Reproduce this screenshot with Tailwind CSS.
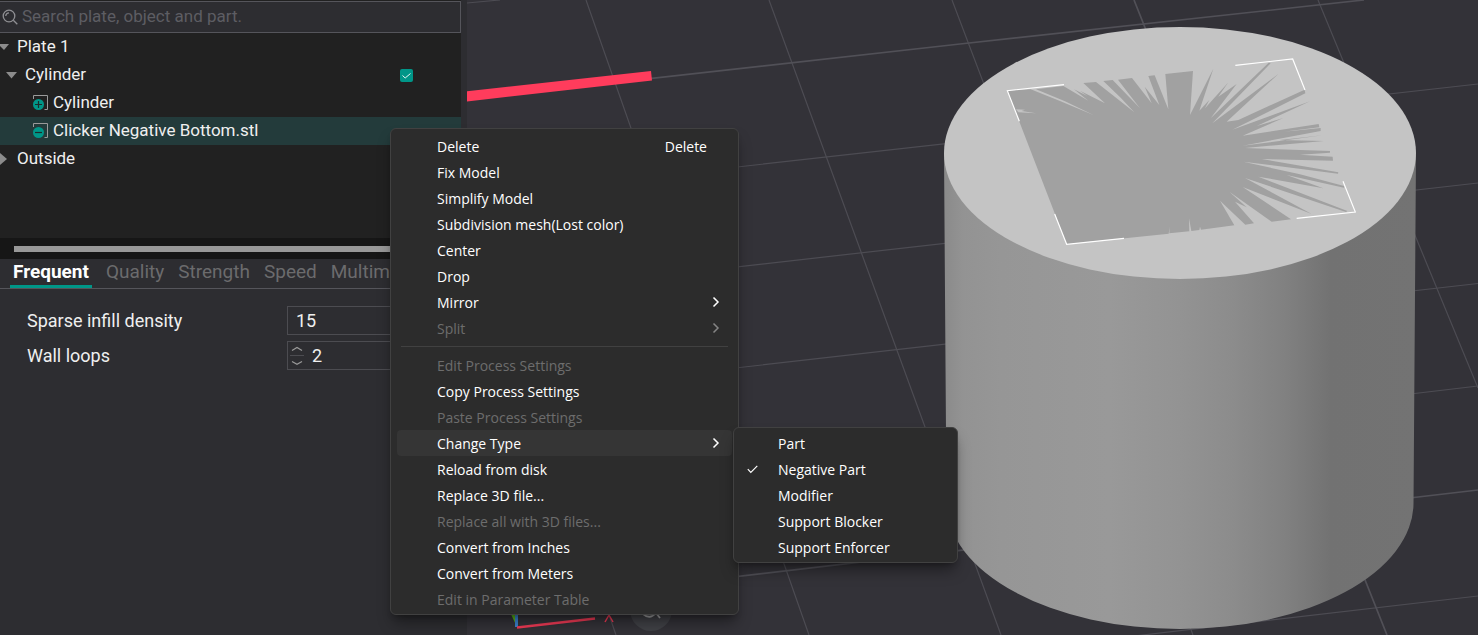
<!DOCTYPE html>
<html lang="en">
<head>
  <meta charset="UTF-8">
  <meta name="viewport" content="width=device-width, initial-scale=1.0">
  <title>Plate editor</title>
  <script src="https://cdn.jsdelivr.net/npm/@tailwindcss/browser@4"></script>
</head>
<body class="relative flex min-h-screen overflow-hidden bg-[#2d2d31] font-['Roboto',sans-serif] text-[17px] text-[#efefef]">

  <!-- Side panel -->
  <aside class="flex w-[467px] shrink-0 flex-col">
    <div class="mr-1.5 bg-[#212121]">
      <!-- Search -->
      <label class="mt-px flex h-8 items-center gap-1 border border-l-0 border-[#55555b] bg-[#2d2d31] pl-[2px]">
        <svg class="size-4 shrink-0" viewBox="0 0 16 16" fill="none" stroke="#8f8f93" stroke-width="1.3">
          <circle cx="7" cy="7" r="5.8"/>
          <path d="M11.3 11.3 15.3 15.3M3.8 7A3.2 3.2 0 0 1 7 3.8"/>
        </svg>
        <input type="text" aria-label="Search" placeholder="Search plate, object and part." class="w-full bg-transparent outline-none placeholder:text-[#5d5d63]">
      </label>

      <!-- Object tree -->
      <ul class="h-[205px]">
        <li class="flex h-7 items-center gap-2">
          <svg class="h-2 w-[9px]" viewBox="0 0 9 8" fill="#8c8c8c"><path d="M-2 1H9L4 7z"/></svg>
          <span>Plate 1</span>
        </li>
        <li class="flex h-7 items-center gap-2 pl-1.5">
          <svg class="h-2 w-[11px]" viewBox="0 0 11 8" fill="#8c8c8c"><path d="M0 1H11L5.500 7.500z"/></svg>
          <label for="cyl" class="flex-1">Cylinder</label>
          <span class="relative mr-12 size-[13px]">
            <input id="cyl" type="checkbox" checked class="block size-[13px] appearance-none rounded-[2px] bg-[#009688]">
            <svg class="pointer-events-none absolute inset-0" viewBox="0 0 13 13" fill="none" stroke="#e6f5f3"><path d="M2.500 6.500 5.200 9 10.500 4.500"/></svg>
          </span>
        </li>
        <li class="flex h-7 items-center gap-1 pl-[33px]">
          <svg class="size-4" viewBox="0 0 16 16" fill="none">
            <path d="M.5 4V.500H14.500V14.500H11.500" stroke="#9a9a9a"/>
            <circle cx="5.500" cy="9.500" r="5.500" fill="#009688"/>
            <path d="M2 9.500H9M5.500 6V13" stroke="#1c2b2a" stroke-width="1.200"/>
          </svg>
          <span>Cylinder</span>
        </li>
        <li class="flex h-7 items-center gap-1 bg-[#233b3b] pl-[33px]">
          <svg class="size-4" viewBox="0 0 16 16" fill="none">
            <path d="M.5 4V.500H14.500V14.500H11.500" stroke="#9a9a9a"/>
            <circle cx="5.500" cy="9.500" r="5.500" fill="#009688"/>
            <path d="M2 9.500H9" stroke="#1c2b2a" stroke-width="1.200"/>
          </svg>
          <span>Clicker Negative Bottom.stl</span>
        </li>
        <li class="flex h-7 items-center gap-2">
          <svg class="h-3 w-[9px]" viewBox="0 0 9 12" fill="#8c8c8c"><path d="M0 0V12L7 6z"/></svg>
          <span>Outside</span>
        </li>
      </ul>
      <div class="h-[21px] bg-[#161616] pt-2 pl-3.5">
        <div class="h-1.5 bg-[#989898]"></div>
      </div>
    </div>

    <!-- Process settings -->
    <nav class="mr-1.5 flex h-[30px] items-start gap-[14px] overflow-hidden border-b border-[#55555b] pl-2.5 text-[19px] text-[#6b6b6d]">
      <a href="#" class="h-[29px] border-b-3 border-[#009688] px-[3px] leading-[26px] font-bold text-white">Frequent</a>
      <a href="#" class="leading-[26px]">Quality</a>
      <a href="#" class="leading-[26px]">Strength</a>
      <a href="#" class="leading-[26px]">Speed</a>
      <a href="#" class="leading-[26px]">Multimaterial</a>
    </nav>
    <form class="flex flex-col gap-1.5 pt-[17px] pl-[27px]">
      <div class="flex h-[29px] items-center">
        <label for="density" class="w-[260px] text-[18px]">Sparse infill density</label>
        <input id="density" type="text" value="15" class="h-full w-[150px] border border-[#4c4c51] bg-transparent px-2 text-[18px] outline-none">
      </div>
      <div class="flex h-[29px] items-center">
        <label for="loops" class="w-[260px] text-[18px]">Wall loops</label>
        <div class="flex h-full w-[150px] items-center gap-2 border border-[#4c4c51] pl-0.5">
          <div class="flex h-5 w-3.5 flex-col divide-y divide-[#4c4c51]">
            <button type="button" aria-label="Increase" class="h-2.5">
              <svg class="h-2 w-3.5" viewBox="0 0 14 8" fill="none" stroke="#9a9a9a" stroke-width="1.200"><path d="M2 4.500 7 1.500 12 4.500"/></svg>
            </button>
            <button type="button" aria-label="Decrease" class="h-2.5">
              <svg class="h-2 w-3.5" viewBox="0 0 14 8" fill="none" stroke="#9a9a9a" stroke-width="1.200"><path d="M2 4.500 7 7.300 12 4.500"/></svg>
            </button>
          </div>
          <input id="loops" type="text" value="2" class="w-20 bg-transparent text-[18px] outline-none">
        </div>
      </div>
    </form>
  </aside>

  <!-- 3D view -->
  <main class="relative flex-1 overflow-hidden bg-[#333238]">
    <svg class="absolute inset-0 h-full w-full" viewBox="467 0 1011 635" preserveAspectRatio="xMinYMin slice">
      <defs>
        <linearGradient id="side" gradientUnits="userSpaceOnUse" x1="944" y1="0" x2="1416" y2="0">
          <stop offset="0" stop-color="#8a8a8a"/>
          <stop offset=".04" stop-color="#939393"/>
          <stop offset=".12" stop-color="#969696"/>
          <stop offset=".35" stop-color="#999999"/>
          <stop offset=".5" stop-color="#939393"/>
          <stop offset=".61" stop-color="#8c8c8c"/>
          <stop offset=".72" stop-color="#818181"/>
          <stop offset=".82" stop-color="#727272"/>
          <stop offset="1" stop-color="#737373"/>
        </linearGradient>
      </defs>

      <!-- Bed grid -->
      <g stroke="#4d4c53" stroke-width="1.200" fill="none">
        <path d="M467 3 500 0M630 179 1478 84M630 279 1478 183M630 380 1478 283.500M630 486 1478 386M1100 640 1478 596"/>
        <path d="M586 0 809 635M769 0 1001 635M952 0 1193 635M1318 0 1478 388M608 612 616 635"/>
        <path d="M467 99 960 44 1364 0M630 589 1478 490M1134 0 1387 635" stroke="#515057" stroke-width="1.700"/>
      </g>
      <path d="M467 91.300 651 71 652 80.500 467 101.500z" fill="#ff3c5c"/>

      <!-- Cylinder -->
      <path d="M944 153 946.500 503A233.500 126 0 0 0 1413.500 503L1416 153z" fill="url(#side)"/>
      <ellipse cx="1180" cy="153" rx="236" ry="126" fill="#c4c4c4"/>

      <!-- Negative part showing through the top face -->
      <g transform="translate(1000 50) scale(.33333)">
        <path fill="#a1a1a1" d="M22 122 92 118 180 153 282 196 195 154 108 118 190 108 265 152 222 118 262 138 240 122 315 160 250 99 288 96 350 145 403 187 362 143 310 93 338 90 420 175 385 130 354 89 396 84 455 160 434 110 478 165 445 78 464 76 505 178 496 72 579 63 570 195 640 56 598 182 628 150 615 175 684 98 655 140 710 102 632 205 806 38 812 40 637 220 835 72 680 215 715 210 914 119 916 130 697 239 930 154 770 228 850 204 728 257 956 222 958 232 850 245 962 234 962 243 728 287 968 256 840 270 972 273 735 294 990 303 990 308 900 314 998 320 999 332 785 327 1015 367 1014 371 730 335 900 373 1032 408 1032 413 860 375 970 415 775 380 1042 483 1038 486 735 384 935 492 728 411 873 508 815 515 688 425 740 472 705 455 762 520 736 524 660 452 703 526 603 539 600 530 598 540 574 543 567 505 568 544 508 550 509 530 506 551 200 583z"/>
        <path fill="#c4c4c4" d="M48 178 75 179 65 183 108 190 55 187z"/>
        <path d="M192 104 22 122 58 214M706 46 878 27 915 120M1029 394 1066 486 890 505M372 565 200 583 164 492" fill="none" stroke="#fff" stroke-width="3.500"/>
      </g>

      <!-- Axis gizmo and view button -->
      <path d="M509 610 514 610 517 627z" fill="#5bb81a"/>
      <path d="M516.500 610V627" stroke="#3b85cf" stroke-width="3"/>
      <path d="M517 627.500 595 618.500" stroke="#f03a55" stroke-width="2.500"/>
      <path d="M605 622 613 608M605 608 613 622" stroke="#f03a55" stroke-width="1.500"/>
      <circle cx="651" cy="610" r="21" fill="#404146"/>
      <path d="M643 614Q650 620 656 613L660 618" fill="none" stroke="#a6a6a8" stroke-width="1.800"/>
    </svg>
  </main>

  <!-- Context menu -->
  <ul class="absolute top-[128px] left-[390px] w-[349px] rounded-md border border-[#414141] bg-[#2c2c2c] px-1.5 pt-1 pb-0.5 font-['Open_Sans',sans-serif] text-[14px] text-white shadow-lg shadow-black/40">
    <li><button class="flex h-[26px] w-full items-center justify-between pr-[25px] pl-10"><span>Delete</span><span>Delete</span></button></li>
    <li><button class="flex h-[26px] w-full items-center pl-10">Fix Model</button></li>
    <li><button class="flex h-[26px] w-full items-center pl-10">Simplify Model</button></li>
    <li><button class="flex h-[26px] w-full items-center pl-10">Subdivision mesh(Lost color)</button></li>
    <li><button class="flex h-[26px] w-full items-center pl-10">Center</button></li>
    <li><button class="flex h-[26px] w-full items-center pl-10">Drop</button></li>
    <li>
      <button class="flex h-[26px] w-full items-center justify-between pr-3 pl-10">Mirror
        <svg class="h-3 w-2" viewBox="0 0 8 12" fill="none" stroke="#fff" stroke-width="1.500"><path d="M1.500 1.500 6 6 1.500 10.500"/></svg>
      </button>
    </li>
    <li>
      <button disabled class="flex h-[26px] w-full items-center justify-between pr-3 pl-10 text-[#6d6d6d]">Split
        <svg class="h-3 w-2" viewBox="0 0 8 12" fill="none" stroke="#858585" stroke-width="1.500"><path d="M1.500 1.500 6 6 1.500 10.500"/></svg>
      </button>
    </li>
    <li class="mx-1 my-[5px] h-px bg-[#414141]"></li>
    <li><button disabled class="flex h-[26px] w-full items-center pl-10 text-[#6d6d6d]">Edit Process Settings</button></li>
    <li><button class="flex h-[26px] w-full items-center pl-10">Copy Process Settings</button></li>
    <li><button disabled class="flex h-[26px] w-full items-center pl-10 text-[#6d6d6d]">Paste Process Settings</button></li>
    <li class="relative">
      <button class="flex h-[26px] w-full items-center justify-between rounded bg-[#353535] pr-3 pl-10">Change Type
        <svg class="h-3 w-2" viewBox="0 0 8 12" fill="none" stroke="#fff" stroke-width="1.500"><path d="M1.500 1.500 6 6 1.500 10.500"/></svg>
      </button>
      <!-- Change Type submenu -->
      <ul class="absolute -top-[3px] left-[336px] w-[225px] rounded-md border border-[#414141] bg-[#2c2c2c] py-0.5 shadow-lg shadow-black/40">
        <li><button class="flex h-[26px] w-full items-center pl-11">Part</button></li>
        <li>
          <button class="flex h-[26px] w-full items-center gap-5 pl-[13px]">
            <svg class="h-2.5 w-[11px]" viewBox="0 0 11 10" fill="none" stroke="#fff" stroke-width="1.200"><path d="M.8 5.200 3.800 8.300 10.300 1.800"/></svg>Negative Part
          </button>
        </li>
        <li><button class="flex h-[26px] w-full items-center pl-11">Modifier</button></li>
        <li><button class="flex h-[26px] w-full items-center pl-11">Support Blocker</button></li>
        <li><button class="flex h-[26px] w-full items-center pl-11">Support Enforcer</button></li>
      </ul>
    </li>
    <li><button class="flex h-[26px] w-full items-center pl-10">Reload from disk</button></li>
    <li><button class="flex h-[26px] w-full items-center pl-10">Replace 3D file...</button></li>
    <li><button disabled class="flex h-[26px] w-full items-center pl-10 text-[#6d6d6d]">Replace all with 3D files...</button></li>
    <li><button class="flex h-[26px] w-full items-center pl-10">Convert from Inches</button></li>
    <li><button class="flex h-[26px] w-full items-center pl-10">Convert from Meters</button></li>
    <li><button disabled class="flex h-[26px] w-full items-center pl-10 text-[#6d6d6d]">Edit in Parameter Table</button></li>
  </ul>
</body>
</html>
